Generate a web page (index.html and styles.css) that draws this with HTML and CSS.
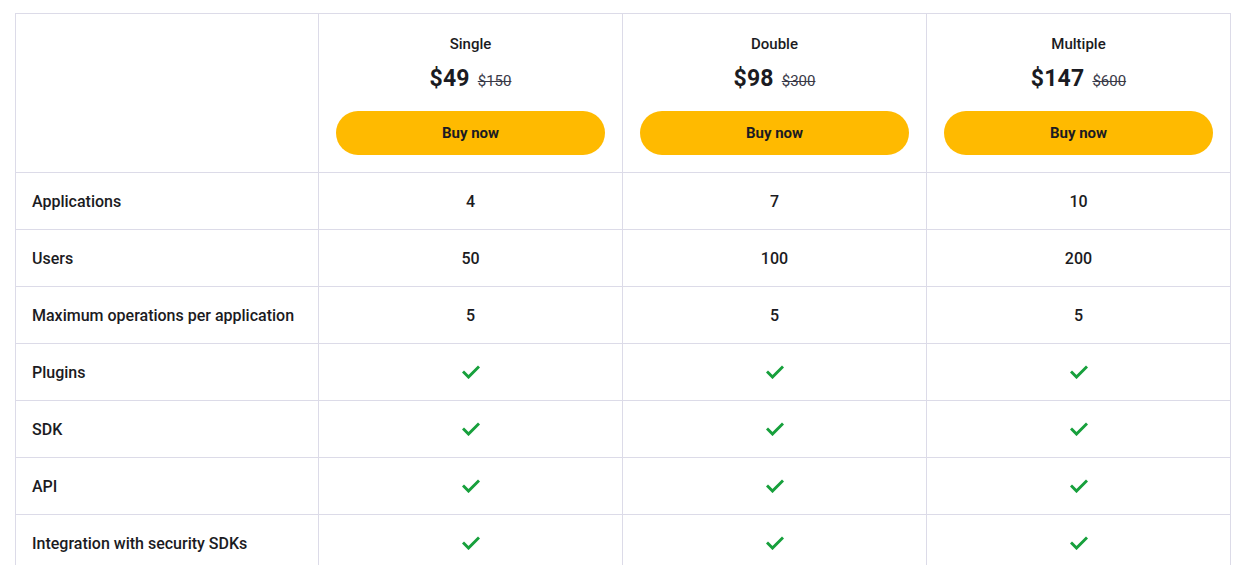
FILE: index.html
```html
<!DOCTYPE html>
<html>
<head>
<meta charset="utf-8">
<link rel="stylesheet" href="styles.css">
</head>
<body>
<table class="pricing">
  <colgroup><col class="c0"><col class="c"><col class="c"><col class="c"></colgroup>
  <thead>
    <tr>
      <th class="empty"></th>
      <th class="plan"><div class="name">Single</div><div class="price"><span class="now">$49</span><s class="old">$150</s></div><button class="buy">Buy now</button></th>
      <th class="plan"><div class="name">Double</div><div class="price"><span class="now">$98</span><s class="old">$300</s></div><button class="buy">Buy now</button></th>
      <th class="plan"><div class="name">Multiple</div><div class="price"><span class="now">$147</span><s class="old">$600</s></div><button class="buy">Buy now</button></th>
    </tr>
  </thead>
  <tbody>
    <tr><td class="label">Applications</td><td>4</td><td>7</td><td>10</td></tr>
    <tr><td class="label">Users</td><td>50</td><td>100</td><td>200</td></tr>
    <tr><td class="label">Maximum operations per application</td><td>5</td><td>5</td><td>5</td></tr>
    <tr><td class="label">Plugins</td><td><svg class="chk" viewBox="0 0 18 14"><path d="M2 7.5l4.5 4.5L16 2.5"/></svg></td><td><svg class="chk" viewBox="0 0 18 14"><path d="M2 7.5l4.5 4.5L16 2.5"/></svg></td><td><svg class="chk" viewBox="0 0 18 14"><path d="M2 7.5l4.5 4.5L16 2.5"/></svg></td></tr>
    <tr><td class="label">SDK</td><td><svg class="chk" viewBox="0 0 18 14"><path d="M2 7.5l4.5 4.5L16 2.5"/></svg></td><td><svg class="chk" viewBox="0 0 18 14"><path d="M2 7.5l4.5 4.5L16 2.5"/></svg></td><td><svg class="chk" viewBox="0 0 18 14"><path d="M2 7.5l4.5 4.5L16 2.5"/></svg></td></tr>
    <tr><td class="label">API</td><td><svg class="chk" viewBox="0 0 18 14"><path d="M2 7.5l4.5 4.5L16 2.5"/></svg></td><td><svg class="chk" viewBox="0 0 18 14"><path d="M2 7.5l4.5 4.5L16 2.5"/></svg></td><td><svg class="chk" viewBox="0 0 18 14"><path d="M2 7.5l4.5 4.5L16 2.5"/></svg></td></tr>
    <tr><td class="label">Integration with security SDKs</td><td><svg class="chk" viewBox="0 0 18 14"><path d="M2 7.5l4.5 4.5L16 2.5"/></svg></td><td><svg class="chk" viewBox="0 0 18 14"><path d="M2 7.5l4.5 4.5L16 2.5"/></svg></td><td><svg class="chk" viewBox="0 0 18 14"><path d="M2 7.5l4.5 4.5L16 2.5"/></svg></td></tr>
  </tbody>
</table>
</body>
</html>
```

FILE: styles.css
```css
html, body { margin: 0; padding: 0; background: #fff; }
body { padding: 13px 9px 0 15px; font-family: Roboto, "Liberation Sans", sans-serif; color: #1b1b22; }
.pricing { border-collapse: collapse; width: 1216px; table-layout: fixed; }
.pricing th, .pricing td { border: 1px solid #dcdbe8; }
.c0 { width: 303px; }
.c { width: 304px; }
.plan { padding: 21px 17px 17px; text-align: center; vertical-align: top; font-weight: 500; }
.name { font-size: 15px; line-height: 18px; font-weight: 500; }
.price { margin-top: 12px; height: 28px; display: flex; justify-content: center; align-items: baseline; gap: 8px; }
.now { font-size: 23px; font-weight: 700; letter-spacing: 0.2px; }
.old { font-size: 15px; font-weight: 400; color: #3a3a48; }
.buy { display: block; width: 100%; height: 44px; margin-top: 18px; border: 0; border-radius: 22px; background: #ffba00; font-family: inherit; font-size: 15px; font-weight: 700; color: #1b1b22; }
.pricing td { height: 56px; padding: 0 16px; text-align: center; font-size: 16px; font-weight: 500; }
.pricing td.label { text-align: left; }
.chk { width: 18px; height: 14px; display: block; margin: 0 auto; fill: none; stroke: #17a03c; stroke-width: 3; stroke-linecap: square; }
```
